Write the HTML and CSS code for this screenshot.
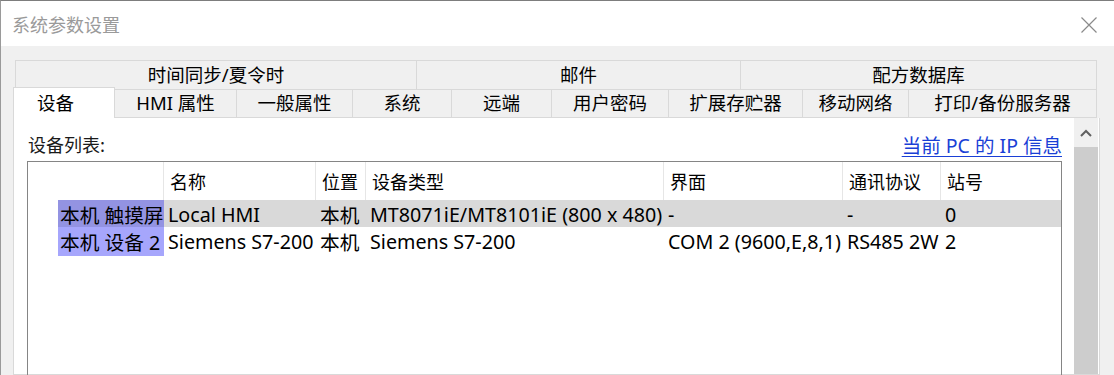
FILE: index.html
```html
<!DOCTYPE html>
<html lang="zh-CN">
<head>
    <meta charset="UTF-8">
    <title>系统参数设置</title>
    <link rel="stylesheet" href="styles.css">
</head>
<body>
    <div class="window">
        <div class="titlebar">
            <span class="title">系统参数设置</span>
            <svg class="close" width="16" height="16" viewBox="0 0 16 16">
                <path d="M0.5 0.5 L15.5 15.5 M15.5 0.5 L0.5 15.5" stroke="#8a8a8a" stroke-width="1.2" fill="none"/>
            </svg>
        </div>

        <div class="dialog-body">
            <div class="tabs">
                <div class="tab-row top-row">
                    <div class="tab wide-1">时间同步/夏令时</div>
                    <div class="tab wide-2">邮件</div>
                    <div class="tab wide-3">配方数据库</div>
                </div>
                <div class="tab-row bottom-row">
                    <div class="tab active">设备</div>
                    <div class="tab w-hmi">HMI 属性</div>
                    <div class="tab w-general">一般属性</div>
                    <div class="tab w-system">系统</div>
                    <div class="tab w-remote">远端</div>
                    <div class="tab w-password">用户密码</div>
                    <div class="tab w-storage">扩展存贮器</div>
                    <div class="tab w-mobile">移动网络</div>
                    <div class="tab w-print">打印/备份服务器</div>
                </div>
            </div>

            <div class="panel">
                <div class="panel-main">
                    <div class="list-header">
                        <span class="list-label">设备列表:</span>
                        <a class="ip-link" href="#">当前 PC 的 IP 信息</a>
                    </div>

                    <div class="device-list">
                        <div class="row head">
                            <div class="cell"></div>
                            <div class="cell">名称</div>
                            <div class="cell">位置</div>
                            <div class="cell">设备类型</div>
                            <div class="cell">界面</div>
                            <div class="cell">通讯协议</div>
                            <div class="cell last">站号</div>
                        </div>
                        <div class="row selected">
                            <div class="cell key"><span class="tag tag-dark">本机 触摸屏</span></div>
                            <div class="cell">Local HMI</div>
                            <div class="cell">本机</div>
                            <div class="cell">MT8071iE/MT8101iE (800 x 480)</div>
                            <div class="cell">-</div>
                            <div class="cell">-</div>
                            <div class="cell">0</div>
                        </div>
                        <div class="row">
                            <div class="cell key"><span class="tag">本机 设备 2</span></div>
                            <div class="cell">Siemens S7-200</div>
                            <div class="cell">本机</div>
                            <div class="cell">Siemens S7-200</div>
                            <div class="cell">COM 2 (9600,E,8,1)</div>
                            <div class="cell">RS485 2W</div>
                            <div class="cell">2</div>
                        </div>
                    </div>
                </div>

                <div class="scrollbar">
                    <div class="scroll-up">
                        <svg width="12" height="8" viewBox="0 0 12 8">
                            <path d="M1 7 L6 2 L11 7" stroke="#606060" stroke-width="2" fill="none"/>
                        </svg>
                    </div>
                    <div class="scroll-thumb"></div>
                </div>
            </div>
        </div>
    </div>
</body>
</html>
```

FILE: styles.css
```css
html, body {
    margin: 0;
    height: 100%;
}

body {
    font-family: "Noto Sans", "Noto Sans CJK SC", sans-serif;
    font-size: 18px;
    color: #000;
    background-color: #f0f0f0;
    overflow: hidden;
}

.window {
    height: 100%;
    border-top: 1px solid #7d7d7d;
    border-left: 1px solid #9a9a9a;
    box-sizing: border-box;
    display: flex;
    flex-direction: column;
}

.titlebar {
    height: 45px;
    flex: none;
    background-color: #fff;
    display: flex;
    align-items: center;
    justify-content: space-between;
    padding: 0 17px 0 11px;
}

.title {
    color: #9a9a9a;
    font-family: "Noto Sans CJK SC", sans-serif;
    font-size: 18px;
}

.close {
    margin-top: 2px;
}

.dialog-body {
    flex: 1;
    padding: 14px 14px 0 12px;
    display: flex;
    flex-direction: column;
    min-height: 0;
}

/* tabs */
.tabs {
    font-family: "Noto Sans", "Noto Sans CJK SC", sans-serif;
    font-size: 18.5px;
}

.tab-row {
    display: flex;
    height: 29px;
}

.top-row {
    margin: 0 2px;
}

.tab {
    box-sizing: border-box;
    border: 1px solid #d9d9d9;
    border-left: none;
    border-bottom: none;
    display: flex;
    align-items: center;
    justify-content: center;
    line-height: 1;
    background-color: #f0f0f0;
    white-space: nowrap;
}

.top-row .tab:first-child {
    border-left: 1px solid #d9d9d9;
}

.wide-1 { width: 402px; }
.wide-2 { width: 324px; }
.wide-3 { width: 356px; }

.bottom-row .tab {
    border-bottom: 1px solid #d9d9d9;
}

.tab.active {
    width: 102px;
    height: 32px;
    margin-top: -2px;
    background-color: #fff;
    border: 1px solid #d9d9d9;
    border-bottom: none;
    justify-content: flex-start;
    padding-left: 23px;
}

.w-hmi { width: 122px; }
.w-general { width: 116px; }
.w-system { width: 99px; }
.w-remote { width: 100px; }
.w-password { width: 117px; }
.w-storage { width: 134px; }
.w-mobile { width: 106px; }
.w-print { width: 188px; }

/* panel */
.panel {
    flex: 1;
    min-height: 0;
    background-color: #fff;
    border: 1px solid #d9d9d9;
    border-top: none;
    display: flex;
}

.panel-main {
    flex: 1;
    padding: 13px 12px 0 13px;
}

.list-header {
    display: flex;
    justify-content: space-between;
    align-items: center;
    height: 26px;
    margin-bottom: 4px;
}

.list-label {
    padding-left: 1px;
    color: #1a1a1a;
    font-family: "Noto Sans CJK SC", sans-serif;
}

.ip-link {
    color: #1a3fd6;
    font-size: 19.5px;
    text-decoration: underline;
    text-underline-offset: 3px;
}

.device-list {
    border: 1px solid #858585;
    height: 300px;
    font-size: 19.7px;
}

.row {
    display: grid;
    grid-template-columns: 136px 152px 50px 298px 179px 98px 1fr;
    height: 27px;
    align-items: center;
}

.row.head {
    height: 38px;
    font-size: 18px;
}

.row.selected {
    background-color: #d9d9d9;
}

.cell {
    height: 100%;
    display: flex;
    align-items: center;
    padding-left: 4px;
    white-space: nowrap;
    box-sizing: border-box;
}

.head .cell {
    padding-left: 6px;
    border-right: 1px solid #e6e6e6;
    font-family: "Noto Sans CJK SC", sans-serif;
}

.head .cell.last {
    border-right: none;
}

.cell.key {
    justify-content: flex-end;
    padding: 0;
    background-color: #fff;
}

.tag {
    width: 106px;
    height: 100%;
    box-sizing: border-box;
    display: flex;
    align-items: center;
    justify-content: space-between;
    padding: 0 1px 0 2px;
    background-color: #a6a6fc;
}

.tag-dark {
    background-color: #9393e2;
}

/* scrollbar */
.scrollbar {
    width: 24px;
    margin-right: 1px;
    background-color: #f0f0f0;
    display: flex;
    flex-direction: column;
}

.scroll-up {
    height: 29px;
    display: flex;
    justify-content: center;
    align-items: center;
}

.scroll-thumb {
    flex: 1;
    background-color: #cdcdcd;
}
```
